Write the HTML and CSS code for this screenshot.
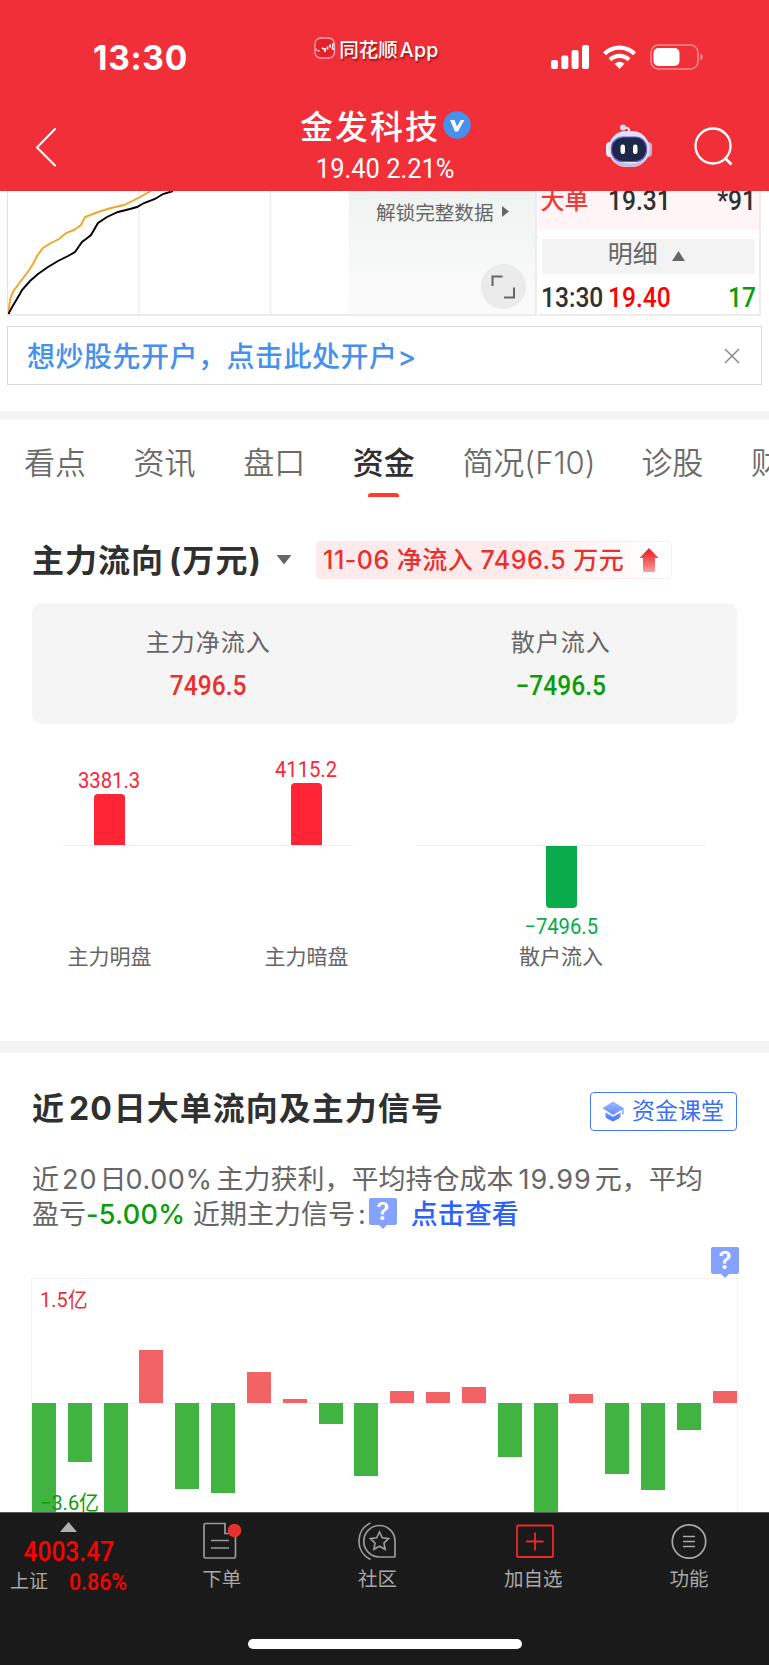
FILE: index.html
```html
<!DOCTYPE html>
<html lang="zh-CN">

<head>
    <meta charset="UTF-8">
    <meta name="viewport" content="width=device-width, initial-scale=1.0">
    <title>金发科技</title>
    <link rel="stylesheet" href="styles.css">
</head>

<body>

    <div class="app">

        <header class="header">
            <div class="status-bar">
                <div class="clock">13:30</div>
                <div class="app-name">
                    <svg width="22" height="22" viewBox="0 0 22 22">
                        <rect x="1" y="1" width="19.500" height="20" rx="6" fill="#e8202c" stroke="#fff" stroke-opacity=".6" stroke-width="1.300" />
                        <path d="M1.500 12.500h1.500M4.500 13v1.500M8 11l2 1M11 11v4M13.500 9.500v3M16 7.500v3M19 6l-.5 5.500 1.500 1" fill="none" stroke="#fff" stroke-width="1.700" />
                    </svg>
                    <span>同花顺<span class="latin">App</span></span>
                </div>
                <div class="status-icons">
                    <svg width="38" height="25" viewBox="0 0 38 25" fill="#fff">
                        <rect x="0" y="15" width="7" height="9" rx="2" />
                        <rect x="10.300" y="10.500" width="7" height="13.500" rx="2" />
                        <rect x="20.600" y="5" width="7" height="19" rx="2" />
                        <rect x="31" y="0" width="7" height="24" rx="2" />
                    </svg>
                    <svg class="wifi" width="33" height="25" viewBox="0 0 33 25" fill="none" stroke="#fff" stroke-width="4.200">
                        <path d="M1.500 8.800a21.500 21.500 0 0 1 30 0" />
                        <path d="M7 14.800a13.500 13.500 0 0 1 19 0" />
                        <path d="M16.500 24l-5-5.200q5-4 10 0z" fill="#fff" stroke="none" />
                    </svg>
                    <svg class="battery" width="54" height="26" viewBox="0 0 54 26">
                        <rect x="1" y="1" width="47" height="24" rx="7.500" fill="none" stroke="#fff" stroke-opacity=".45" stroke-width="1.500" />
                        <rect x="3.500" y="4" width="26" height="18" rx="5" fill="#fff" />
                        <path d="M50.500 9.500q4.500 3.500 0 7z" fill="#fff" fill-opacity=".5" />
                    </svg>
                </div>
            </div>

            <div class="nav-bar">
                <svg class="back" width="24" height="40" viewBox="0 0 24 40">
                    <path d="M21 2L3 20.500 21 38.500" fill="none" stroke="#fff" stroke-width="2" stroke-linecap="round" />
                </svg>
                <div class="stock">
                    <h1>金发科技
                        <svg width="28" height="28" viewBox="0 0 28 28">
                            <circle cx="14" cy="14" r="13.700" fill="#4691ee" />
                            <path d="M7 9h4.500l2.500 6.500L17.800 9h3.500L15 20.500h-3z" fill="#fff" />
                        </svg>
                    </h1>
                    <div class="quote num">19.40 2.21%</div>
                </div>
                <div class="nav-actions">
                    <svg width="48" height="44" viewBox="0 0 48 44">
                        <path d="M18 3.500c6 0 6 1 6.500 5" fill="none" stroke="#e9e8f7" stroke-width="2.200" />
                        <circle cx="18" cy="3.500" r="3" fill="#dcdaf2" />
                        <rect x="1" y="18" width="8" height="15" rx="4" fill="#eeedf9" />
                        <rect x="39" y="18" width="8" height="15" rx="4" fill="#bdb9e3" />
                        <rect x="3.500" y="7" width="41" height="36" rx="17.500" fill="#e2e0f4" />
                        <path d="M7 33q8 7 19 7 12 0 15-7-2 10-17 10Q11 43 7 33z" fill="#c3c0e5" />
                        <rect x="6.500" y="13" width="35" height="24.500" rx="11" fill="#1d2749" stroke="#6c55d8" stroke-width="1.200" />
                        <path d="M9 18q2-4.500 8-4.500" fill="none" stroke="#3fb0d8" stroke-width="1" />
                        <rect x="15.500" y="20.500" width="4.500" height="9.500" rx="2.200" fill="#fff" />
                        <rect x="28" y="20.500" width="4.500" height="9.500" rx="2.200" fill="#fff" />
                    </svg>
                    <svg width="40" height="40" viewBox="0 0 40 40" fill="none" stroke="#fff" stroke-width="2.300">
                        <circle cx="19" cy="19" r="17.500" />
                        <path d="M31 31l6.500 6.500" stroke-width="2.800" />
                    </svg>
                </div>
            </div>
        </header>

        <section class="market">
            <div class="trend">
                <svg width="342" height="124" viewBox="0 0 342 124" fill="none">
                    <path d="M131 0V124M262.500 0V124" stroke="#ececec" stroke-width="1.300" />
                    <path d="M.500 123C1 112 3 104 5.500 100L12 91 19 82 25 73 29 65 35 57 43 52 51 48 58 42 66 39 73 34 77 26 90 21 103 17 116 14 132 6 143 0" stroke="#f9a323" stroke-width="1.900" />
                    <path d="M.500 123C4 115 10 107 14 99L22 90 30 83 40 76 50 70 60 65 67 61 74 51 78 48 83 44 90 32 99 26 110 21 122 18 129 16 136 12 147 8 155 3 165 0" stroke="#000" stroke-width="1.900" />
                </svg>
            </div>
            <div class="locked">
                <div class="unlock">解锁完整数据
                    <svg width="7" height="11" viewBox="0 0 7 11"><path d="M0 0l7 5.500L0 11z" fill="#666" /></svg>
                </div>
                <div class="expand">
                    <svg width="24" height="24" viewBox="0 0 24 24" fill="none" stroke="#666" stroke-width="2">
                        <path d="M1.500 11V1.500H11.500M13 22.500h10V12.500" />
                    </svg>
                </div>
            </div>
            <div class="orders">
                <div class="order big">
                    <span class="side">大单</span>
                    <span class="num price">19.31</span>
                    <span class="num volume">*91</span>
                </div>
                <div class="detail">明细
                    <svg width="13" height="10" viewBox="0 0 13 10"><path d="M6.500 0L13 10H0z" fill="#666" /></svg>
                </div>
                <div class="order">
                    <span class="num time">13:30</span>
                    <span class="num price red">19.40</span>
                    <span class="num volume green">17</span>
                </div>
            </div>
        </section>

        <div class="open-account">
            <span>想炒股先开户，点击此处开户&gt;</span>
            <svg width="16" height="16" viewBox="0 0 16 16"><path d="M1 1l14 14M15 1L1 15" stroke="#8c8c8c" stroke-width="1.500" /></svg>
        </div>

        <nav class="tabs">
            <div class="tab">看点</div>
            <div class="tab">资讯</div>
            <div class="tab">盘口</div>
            <div class="tab active">资金</div>
            <div class="tab wide">简况(F10)</div>
            <div class="tab">诊股</div>
            <div class="tab">财</div>
        </nav>

        <section class="main-flow">
            <div class="flow-head">
                <h2>主力流向<span class="unit">(万元)</span></h2>
                <svg class="caret" width="16" height="10" viewBox="0 0 16 10"><path d="M.500 0h15L8 9.500z" fill="#666" /></svg>
                <div class="flow-tag">
                    <span>11-06 净流入 7496.5 万元</span>
                    <svg width="20" height="24" viewBox="0 0 20 24">
                        <defs>
                            <linearGradient id="arrow" x1="0" y1="0" x2="0" y2="1">
                                <stop offset=".2" stop-color="#ee2e2e" />
                                <stop offset="1" stop-color="#f9a0a0" />
                            </linearGradient>
                        </defs>
                        <path d="M10 0l9.500 10H16v12.500q0 1.500-1.500 1.500h-9Q4 24 4 22.500V10H.500z" fill="url(#arrow)" />
                    </svg>
                </div>
            </div>

            <div class="summary">
                <div class="summary-item">
                    <div class="name">主力净流入</div>
                    <div class="num amount up">7496.5</div>
                </div>
                <div class="summary-item">
                    <div class="name">散户流入</div>
                    <div class="num amount down">−7496.5</div>
                </div>
            </div>

            <div class="flow-chart">
                <div class="flow-group pair">
                    <div class="half top">
                        <div class="flow-col"><span class="num">3381.3</span><i style="height: 51px"></i></div>
                        <div class="flow-col"><span class="num">4115.2</span><i style="height: 62px"></i></div>
                    </div>
                    <div class="half bottom"></div>
                    <div class="flow-labels">
                        <div class="flow-col">主力明盘</div>
                        <div class="flow-col">主力暗盘</div>
                    </div>
                </div>
                <div class="flow-group">
                    <div class="half top"></div>
                    <div class="half bottom">
                        <div class="flow-col"><i style="height: 62px"></i><span class="num">−7496.5</span></div>
                    </div>
                    <div class="flow-labels">
                        <div class="flow-col">散户流入</div>
                    </div>
                </div>
            </div>
        </section>

        <section class="signal">
            <div class="signal-head">
                <h2>近<span class="days">20</span>日大单流向及主力信号</h2>
                <div class="course">
                    <svg width="22" height="21" viewBox="0 0 22 21">
                        <defs>
                            <linearGradient id="cap" x1="0" y1="0" x2="0" y2="1">
                                <stop offset="0" stop-color="#9db8ff" />
                                <stop offset="1" stop-color="#4478fa" />
                            </linearGradient>
                        </defs>
                        <path d="M11 .500L21.500 7v6.500h-1.300V8.500L11 14 .500 7.300zM3.500 11.500l7.500 4.300 7.500-4.300v4.500q-1 1.500-7.500 4.500-6.500-3-7.500-4.500z" fill="url(#cap)" />
                    </svg>
                    <span>资金课堂</span>
                </div>
            </div>

            <p class="desc">近<span class="fig day">20</span>日<span class="pct">0.00%</span>主力获利，平均持仓成本<span class="fig">19.99</span>元，平均<br>盈亏<span class="loss">-5.00%</span> 近期主力信号<span class="colon">:</span><span class="help">?</span><span class="link">点击查看</span></p>

            <div class="chart-help"><span class="help">?</span></div>

            <div class="chart">
                <span class="num scale max">1.5亿</span>
                <div class="bar down"><i style="height: 110px"></i></div>
                <div class="bar down"><i style="height: 59px"></i></div>
                <div class="bar down"><i style="height: 110px"></i></div>
                <div class="bar up"><i style="height: 53px"></i></div>
                <div class="bar down"><i style="height: 86px"></i></div>
                <div class="bar down"><i style="height: 90px"></i></div>
                <div class="bar up"><i style="height: 31px"></i></div>
                <div class="bar up"><i style="height: 4px"></i></div>
                <div class="bar down"><i style="height: 21px"></i></div>
                <div class="bar down"><i style="height: 73px"></i></div>
                <div class="bar up"><i style="height: 12px"></i></div>
                <div class="bar up"><i style="height: 11px"></i></div>
                <div class="bar up"><i style="height: 16px"></i></div>
                <div class="bar down"><i style="height: 54px"></i></div>
                <div class="bar down"><i style="height: 110px"></i></div>
                <div class="bar up"><i style="height: 9px"></i></div>
                <div class="bar down"><i style="height: 71px"></i></div>
                <div class="bar down"><i style="height: 87px"></i></div>
                <div class="bar down"><i style="height: 27px"></i></div>
                <div class="bar up"><i style="height: 12px"></i></div>
                <span class="num scale min">−3.6亿</span>
            </div>
        </section>

        <footer class="footer">
            <div class="toolbar">
                <div class="index">
                    <svg width="17" height="10" viewBox="0 0 17 10"><path d="M8.500 0L17 10H0z" fill="#b0b0b0" /></svg>
                    <div class="num point">4003.47</div>
                    <div class="index-row"><span>上证</span><span class="num rate">0.86%</span></div>
                </div>
                <div class="tool">
                    <svg width="38" height="38" viewBox="0 0 38 38" fill="none" stroke="#9a9a9a" stroke-width="1.700">
                        <path d="M22 1.500H2.500q-1.500 0-1.500 1.500V34.500q0 1.500 1.500 1.500h28.500q1.500 0 1.500-1.500V11.500H22z" />
                        <path d="M8 18.500h18M8 26h18" />
                        <circle cx="31.500" cy="8.500" r="6.800" fill="#e93030" stroke="none" />
                    </svg>
                    <span>下单</span>
                </div>
                <div class="tool">
                    <svg width="42" height="38" viewBox="0 0 42 38" fill="none" stroke="#9a9a9a" stroke-width="1.700">
                        <path d="M22.500 3.500A15.500 15.500 0 1 0 22.500 35H37q1 0 1-1V19A15.500 15.500 0 0 0 22.500 3.500z" />
                        <path d="M13.500 1C-2 8-2 30 13.500 37.500" />
                        <path d="M22.500 10l2.800 5.800 6.200.9-4.500 4.400 1.100 6.200-5.600-3-5.600 3 1.100-6.200-4.500-4.400 6.200-.9z" />
                    </svg>
                    <span>社区</span>
                </div>
                <div class="tool">
                    <svg class="add" width="38" height="38" viewBox="0 0 38 38" fill="none" stroke="#ee2828" stroke-width="1.800">
                        <rect x="1" y="3.500" width="36" height="31.500" rx="1" />
                        <path d="M19 10.500v18M10.200 19.500h17.500" />
                    </svg>
                    <span>加自选</span>
                </div>
                <div class="tool">
                    <svg width="38" height="38" viewBox="0 0 38 38" fill="none" stroke="#a8a8a8" stroke-width="1.700">
                        <circle cx="19" cy="19.500" r="16.700" />
                        <path d="M13 14.500h12M13 19.500h12M13 24.500h12" />
                    </svg>
                    <span>功能</span>
                </div>
            </div>
            <div class="home-bar"></div>
        </footer>

    </div>

</body>

</html>
```

FILE: styles.css
```css
* {
    box-sizing: border-box;
}

body {
    margin: 0;
    background-color: #fff;
    color: #303030;
    font-family: Inter, "Noto Sans CJK SC", sans-serif;
}

svg {
    display: block;
    flex: none;
}

h1, h2, p {
    margin: 0;
}

.app {
    width: 769px;
    height: 1665px;
    overflow: hidden;
    display: flex;
    flex-direction: column;
}

/* narrow figures used for quotes */
.num {
    display: inline-block;
    font-family: Roboto, "Noto Sans CJK SC", sans-serif;
    white-space: nowrap;
    transform: scaleX(.91);
}

.red {
    color: #ff0000;
}

.green {
    color: #0a9c0a;
}

/* header */
.header {
    height: 191px;
    flex: none;
    background-color: #f12f38;
    color: #fff;
}

.status-bar {
    height: 104px;
    padding: 0 65px 0 93px;
    display: flex;
    justify-content: space-between;
}

.clock {
    width: 217px;
    padding-top: 38px;
    font-size: 33.500px;
    line-height: 40px;
    font-weight: 700;
    letter-spacing: .7px;
}

.app-name {
    display: flex;
    align-items: center;
    gap: 3px;
    height: 28px;
    margin-top: 34px;
    font-size: 19.500px;
    font-weight: 500;
    text-shadow: 1px 2px 2px rgba(90, 0, 0, .6);
    white-space: nowrap;
}

.latin {
    margin-left: 2px;
    letter-spacing: .3px;
}

.status-icons {
    display: flex;
    width: 267px;
    justify-content: flex-end;
    padding-top: 45px;
    margin-left: -6px;
}

.wifi {
    margin-left: 14px;
}

.battery {
    margin-left: 14px;
    margin-top: -1px;
}

.nav-bar {
    display: flex;
    justify-content: space-between;
    height: 87px;
    padding: 0 35px 0 34px;
}

.back {
    margin-top: 23px;
    margin-right: 108px;
}

.stock {
    display: flex;
    flex-direction: column;
    align-items: center;
}

.stock h1 {
    display: flex;
    align-items: center;
    gap: 3px;
    height: 46px;
    margin-top: -2px;
    font-size: 33px;
    font-weight: 500;
    letter-spacing: 2px;
}

.quote {
    font-size: 28px;
    line-height: 34px;
    margin-top: 4px;
}

.nav-actions {
    display: flex;
    gap: 41px;
    padding-top: 20px;
}

.nav-actions svg + svg {
    margin-top: 3px;
}

/* chart and order panels */
.market {
    display: flex;
    height: 125px;
    flex: none;
    padding: 0 8px 0 7px;
}

.trend {
    width: 342px;
    border-left: 1px solid #e2e2e2;
    border-bottom: 2px solid #ececec;
}

.locked {
    width: 188px;
    padding: 3px 9px 0 0;
    border-right: 2px solid #ececec;
    border-bottom: 2px solid #ececec;
    background: linear-gradient(#eff3f2, #fafafa 85%);
    display: flex;
    flex-direction: column;
    align-items: flex-end;
}

.unlock {
    display: flex;
    align-items: center;
    gap: 8px;
    padding-right: 17px;
    height: 34px;
    font-size: 19.600px;
    color: #666;
}

.expand {
    display: flex;
    align-items: center;
    justify-content: center;
    width: 45px;
    height: 45px;
    margin-top: 36px;
    border-radius: 50%;
    background-color: #ebebeb;
}

.orders {
    width: 224px;
    margin-left: 1px;
    border-right: 2px solid #ececec;
    border-bottom: 2px solid #ececec;
}

.order {
    display: grid;
    grid-template-columns: 67px 1fr 50px;
    align-items: center;
    height: 42px;
    padding: 6px 3px 0 3px;
    font-size: 27px;
    font-weight: 500;
    line-height: 36px;
}

/* row scrolled partly under the header */
.order.big {
    height: 39px;
    margin-bottom: 9px;
    padding-top: 0;
    align-content: end;
    padding-bottom: 11px;
    background-color: #fff5f6;
    overflow: hidden;
}

.order .num {
    transform-origin: left;
}

.order .volume {
    text-align: right;
    transform-origin: right;
}

.side {
    font-size: 24px;
    color: #f03a3a;
}

.detail {
    display: flex;
    align-items: center;
    justify-content: center;
    gap: 14px;
    height: 35px;
    margin: 0 4px;
    padding: 0 4px 4px 0;
    background-color: #f3f3f3;
    color: #666;
    font-size: 25px;
    line-height: 31px;
}

.detail svg {
    margin-top: 3px;
}

.open-account {
    display: flex;
    align-items: center;
    justify-content: space-between;
    flex: none;
    height: 59px;
    margin: 10px 7px 26px;
    padding: 0 21px 0 19px;
    border: 1px solid #d9d9d9;
    color: #4691ee;
    font-size: 28px;
    font-weight: 500;
    letter-spacing: .5px;
}

.open-account span {
    margin-top: -2px;
}

/* tabs */
.tabs {
    display: flex;
    flex: none;
    height: 86px;
    padding: 8px 0 0 24px;
    border-top: 8px solid #f3f3f3;
    overflow: hidden;
}

.tab {
    display: flex;
    flex-direction: column;
    flex: none;
    width: 109.600px;
    font-size: 31px;
    line-height: 71px;
    color: #6b6b6b;
    font-weight: 350;
    white-space: nowrap;
}

.tab.wide {
    width: 179px;
}

.tab.active {
    color: #303030;
    font-weight: 500;
}

.tab.active::after {
    content: "";
    flex: none;
    width: 31px;
    height: 6px;
    margin: -5px 0 0 15px;
    border-radius: 3px;
    background-color: #ff3b30;
}

/* main flow */
.main-flow {
    flex: none;
    height: 544px;
    padding: 44px 32px 0;
}

.flow-head {
    display: flex;
    align-items: center;
    height: 38px;
}

.flow-head h2, .signal-head h2 {
    font-size: 32px;
    font-weight: 700;
    line-height: 38px;
    letter-spacing: 1px;
    white-space: nowrap;
}

.flow-head h2 {
    width: 244px;
    padding-top: 2px;
}

.unit {
    margin-left: 5px;
    letter-spacing: 1.200px;
}

.flow-tag {
    display: flex;
    align-items: center;
    justify-content: space-between;
    width: 356px;
    height: 38px;
    margin-left: 24px;
    padding: 0 12px 0 6px;
    border: 1px solid #fdeaea;
    border-radius: 4px;
    background: linear-gradient(100deg, #fdeaea 55%, #fff 95%);
    color: #e93030;
    font-size: 25px;
    font-weight: 500;
    line-height: 32px;
    letter-spacing: .5px;
    white-space: nowrap;
}

.summary {
    display: flex;
    height: 121px;
    margin-top: 24px;
    padding-top: 23px;
    border-radius: 10px;
    background-color: #f5f5f5;
    text-align: center;
}

.summary-item {
    flex: 1;
}

.name {
    font-size: 24px;
    line-height: 34px;
    letter-spacing: 1px;
    color: #666;
}

.amount {
    margin-top: 9px;
    font-size: 27px;
    line-height: 34px;
    font-weight: 500;
}

.amount.up {
    color: #e93030;
}

.amount.down {
    color: #0a9c0a;
}

.flow-chart {
    display: flex;
    gap: 63px;
    padding-left: 31px;
}

.flow-group {
    width: 290px;
}

.half, .flow-labels {
    display: flex;
    justify-content: center;
}

.pair .half, .pair .flow-labels {
    justify-content: space-between;
    padding: 0 31px;
}

.half.top {
    height: 122px;
    border-bottom: 1px solid #f0f0f0;
    align-items: flex-end;
    color: #ff2436;
}

.half.bottom {
    height: 97px;
    color: #09ab4b;
}

.flow-col {
    display: flex;
    flex-direction: column;
    align-items: center;
    width: 31px;
    font-size: 21px;
    line-height: 27px;
    white-space: nowrap;
}

.flow-col i {
    width: 31px;
    background-color: currentColor;
    border-radius: 4px 4px 0 0;
}

.bottom .flow-col i {
    border-radius: 0 0 4px 4px;
}

.flow-col .num {
    font-size: 21.500px;
    transform: scaleX(.94);
}

.bottom .flow-col .num {
    margin-top: 5px;
}

.flow-labels {
    color: #666;
}

/* signal */
.signal {
    flex: none;
    height: 471px;
    padding: 39px 32px 0;
    border-top: 12px solid #f3f3f3;
    overflow: hidden;
}

.signal-head {
    display: flex;
    justify-content: space-between;
    height: 40px;
}

.signal-head h2 {
    margin-top: -2px;
}

.days {
    margin: 0 1px 0 4px;
}

.course {
    display: flex;
    align-items: center;
    gap: 8px;
    width: 147px;
    height: 39px;
    padding-left: 11px;
    border: 1px solid #4478fa;
    border-radius: 4px;
    color: #3a6ff8;
    font-size: 23px;
    line-height: 30px;
    white-space: nowrap;
}

.course span {
    margin-top: -2px;
}

.desc {
    margin-top: 30px;
    font-size: 27px;
    line-height: 35px;
    height: 70px;
    color: #666;
    white-space: nowrap;
}

.fig {
    margin: 0 3px 0 5px;
    letter-spacing: 1px;
}

.fig.day {
    margin: 0 2px 0 3px;
}

.pct {
    margin: 0 4px 0 -1px;
    letter-spacing: .6px;
}

.loss {
    color: #0a9c0a;
    font-weight: 500;
    letter-spacing: .3px;
}

.colon {
    margin: 0 3px 0 3px;
}

.link {
    margin-left: 14px;
    color: #2c62fa;
    font-weight: 500;
}

.help {
    display: inline-block;
    position: relative;
    width: 28px;
    height: 27px;
    border-radius: 2px;
    background-color: #86a2ff;
    color: #fff;
    font-size: 24px;
    font-weight: 600;
    line-height: 28px;
    text-align: center;
}

.desc .help {
    margin: -4px 0;
    vertical-align: 4px;
}

.help::after {
    content: "";
    position: absolute;
    left: 10px;
    top: 27px;
    border: 4px solid transparent;
    border-top-color: #86a2ff;
}

.chart-help {
    display: flex;
    justify-content: flex-end;
    height: 31px;
    margin: 15px -2px 0 0;
}

.chart {
    display: flex;
    justify-content: space-between;
    position: relative;
    height: 236px;
    margin: 0 -1px 0;
    border: 1px solid #f2f2f2;
    border-bottom: none;
    background: linear-gradient(#f2f2f2, #f2f2f2) 0 124px / 100% 1px no-repeat;
}

.bar {
    display: flex;
    width: 24px;
}

.bar i {
    width: 24px;
}

.bar.up {
    height: 124px;
    align-items: flex-end;
}

.bar.up i {
    background-color: #f16364;
}

.bar.down {
    padding-top: 124px;
}

.bar.down i {
    background-color: #41b341;
}

.scale {
    position: absolute;
    left: 8px;
    font-size: 21px;
    line-height: 26px;
    transform: scaleX(.95);
    transform-origin: left;
}

.scale.max {
    top: 8px;
    color: #e93030;
}

.scale.min {
    top: 211px;
    color: #0a9c0a;
}

/* footer */
.footer {
    position: relative;
    flex: none;
    height: 153px;
    border-top: 1px solid #555;
    background-color: #1a1a1a;
    color: #a8a8a8;
}

.toolbar {
    display: flex;
    height: 126px;
}

.index {
    display: flex;
    flex-direction: column;
    align-items: center;
    width: 144px;
    padding: 9px 7px 0 0;
}

.point {
    margin-top: 4px;
    font-size: 27px;
    line-height: 32px;
    font-weight: 500;
    color: #ff0000;
}

.index-row {
    display: flex;
    align-items: center;
    gap: 18px;
    height: 30px;
    margin: -1px 0 0 3px;
    font-size: 19px;
    line-height: 28px;
}

.rate {
    font-size: 23.500px;
    font-weight: 500;
    color: #ff0000;
}

.tool {
    display: flex;
    flex-direction: column;
    align-items: center;
    width: 155.700px;
    padding-top: 9px;
    font-size: 19.500px;
    line-height: 28px;
}

.tool span {
    margin-top: 5px;
}

.add {
    margin-left: 3px;
}

.home-bar {
    width: 274px;
    height: 10px;
    margin: 0 auto;
    border-radius: 5px;
    background-color: #fff;
}
```
